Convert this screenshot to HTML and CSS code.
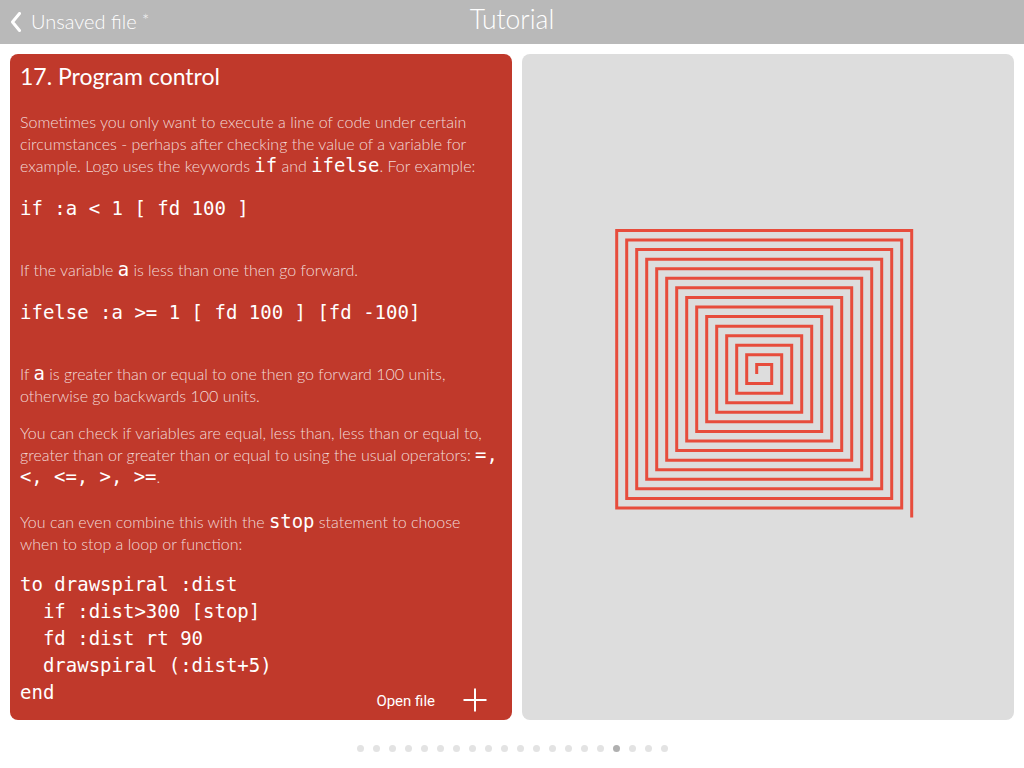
FILE: index.html
```html
<!DOCTYPE html>
<html lang="en">
<head>
<meta charset="utf-8">
<title>Tutorial</title>
<link rel="stylesheet" href="styles.css">
</head>
<body>
<header class="topbar">
  <div class="topbar-left">
    <svg class="chevron" width="10" height="20" viewBox="0 0 10 20"><polyline points="8.5,1.5 1.5,10 8.5,18.5" fill="none" stroke="#fff" stroke-width="3" stroke-linecap="round" stroke-linejoin="round"/></svg>
    <span class="back-label">Unsaved file <span class="star">*</span></span>
  </div>
  <div class="topbar-title">Tutorial</div>
  <div></div>
</header>
<main class="main">
  <section class="card">
    <h1 class="lesson-title">17. Program control</h1>
    <p class="text">Sometimes you only want to execute a line of code under certain circumstances - perhaps after checking the value of a variable for example. Logo uses the keywords <code class="kw">if</code> and <code class="kw">ifelse</code>. For example:</p>
    <pre class="code">if :a &lt; 1 [ fd 100 ]</pre>
    <p class="text">If the variable <code class="kw">a</code> is less than one then go forward.</p>
    <pre class="code">ifelse :a &gt;= 1 [ fd 100 ] [fd -100]</pre>
    <p class="text">If <code class="kw">a</code> is greater than or equal to one then go forward 100 units, otherwise go backwards 100 units.</p>
    <p class="text text-next">You can check if variables are equal, less than, less than or equal to, greater than or greater than or equal to using the usual operators: <code class="kw">=, &lt;, &lt;=, &gt;, &gt;=</code>.</p>
    <p class="text text-spaced">You can even combine this with the <code class="kw">stop</code> statement to choose when to stop a loop or function:</p>
    <pre class="code code-program">to drawspiral :dist
  if :dist&gt;300 [stop]
  fd :dist rt 90
  drawspiral (:dist+5)
end</pre>
    <div class="card-actions">
      <span class="open-file">Open file</span>
      <svg class="plus" width="24" height="24" viewBox="0 0 24 24"><path d="M12 0.5 V23.5 M0.5 12 H23.5" stroke="#fff" stroke-width="2" fill="none"/></svg>
    </div>
  </section>
  <section class="canvas">
    <svg class="turtle" viewBox="522 54 492 666" width="492" height="666">
      <g transform="translate(756.7 374) scale(1 0.957)">
        <polyline fill="none" stroke="#e74c3c" stroke-width="3" stroke-linejoin="miter" vector-effect="non-scaling-stroke" points="0,0 0,-10 15,-10 15,10 -10,10 -10,-20 25,-20 25,20 -20,20 -20,-30 35,-30 35,30 -30,30 -30,-40 45,-40 45,40 -40,40 -40,-50 55,-50 55,50 -50,50 -50,-60 65,-60 65,60 -60,60 -60,-70 75,-70 75,70 -70,70 -70,-80 85,-80 85,80 -80,80 -80,-90 95,-90 95,90 -90,90 -90,-100 105,-100 105,100 -100,100 -100,-110 115,-110 115,110 -110,110 -110,-120 125,-120 125,120 -120,120 -120,-130 135,-130 135,130 -130,130 -130,-140 145,-140 145,140 -140,140 -140,-150 155,-150 155,150"/>
      </g>
    </svg>
  </section>
</main>
<nav class="dots">
  <span class="dot"></span><span class="dot"></span><span class="dot"></span><span class="dot"></span><span class="dot"></span><span class="dot"></span><span class="dot"></span><span class="dot"></span><span class="dot"></span><span class="dot"></span><span class="dot"></span><span class="dot"></span><span class="dot"></span><span class="dot"></span><span class="dot"></span><span class="dot"></span><span class="dot dot-active"></span><span class="dot"></span><span class="dot"></span><span class="dot"></span>
</nav>
</body>
</html>
```
FILE: styles.css
```css
html, body {
  margin: 0;
  padding: 0;
  background: #ffffff;
}
body {
  width: 1024px;
  height: 768px;
  overflow: hidden;
  font-family: Lato, "Open Sans", sans-serif;
}
.topbar {
  height: 44px;
  background: #b9b9b9;
  display: grid;
  grid-template-columns: 1fr auto 1fr;
  align-items: center;
  color: #ffffff;
}
.topbar-left {
  display: flex;
  align-items: center;
  padding-left: 11px;
  gap: 10px;
}
.chevron {
  display: block;
}
.back-label {
  font-family: Lato, sans-serif;
  font-weight: 300;
  font-size: 20px;
  line-height: 24px;
  margin-top: -3px;
}
.star {
  font-size: 17px;
  opacity: 0.85;
  vertical-align: 2px;
}
.topbar-title {
  font-family: Lato, sans-serif;
  font-weight: 300;
  font-size: 26.5px;
  line-height: 30px;
  margin-top: -7px;
}
.main {
  display: flex;
  gap: 10px;
  padding: 10px 10px 0 10px;
  height: 666px;
}
.card {
  position: relative;
  width: 502px;
  box-sizing: border-box;
  background: #c0392b;
  border-radius: 8px;
  padding: 7px 10px 0 10px;
  color: #ffffff;
}
.lesson-title {
  margin: 0 0 20px 0;
  font-family: Lato, sans-serif;
  font-weight: 400;
  font-size: 23px;
  line-height: 30px;
}
.text {
  margin: 0;
  font-family: Lato, sans-serif;
  font-weight: 300;
  font-size: 16px;
  line-height: 22px;
  color: rgba(255, 255, 255, 0.82);
}
.text + .text {
  margin-top: 15px;
}
.text + .text-spaced {
  margin-top: 23px;
}
.kw {
  font-family: "DejaVu Sans Mono", "Liberation Mono", monospace;
  font-size: 18.9px;
  line-height: 1;
  color: #ffffff;
}
.code {
  margin: 18px 0 37px 0;
  font-family: "DejaVu Sans Mono", "Liberation Mono", monospace;
  font-size: 19px;
  line-height: 27px;
  color: #ffffff;
  white-space: pre;
}
.code-program {
  margin: 16px 0 0 0;
}
.card-actions {
  position: absolute;
  right: 25px;
  bottom: 8px;
  display: flex;
  align-items: center;
  gap: 28px;
}
.open-file {
  font-family: Roboto, "Open Sans", sans-serif;
  font-size: 15px;
  line-height: 20px;
  color: #ffffff;
  margin-top: 1px;
}
.plus {
  display: block;
}
.canvas {
  width: 492px;
  background: #dddddd;
  border-radius: 8px;
  overflow: hidden;
}
.turtle {
  display: block;
}
.dots {
  display: flex;
  justify-content: center;
  gap: 9px;
  padding-top: 25px;
}
.dot {
  width: 7px;
  height: 7px;
  border-radius: 50%;
  background: #e3e3e3;
}
.dot-active {
  background: #b0b0b0;
}
```
